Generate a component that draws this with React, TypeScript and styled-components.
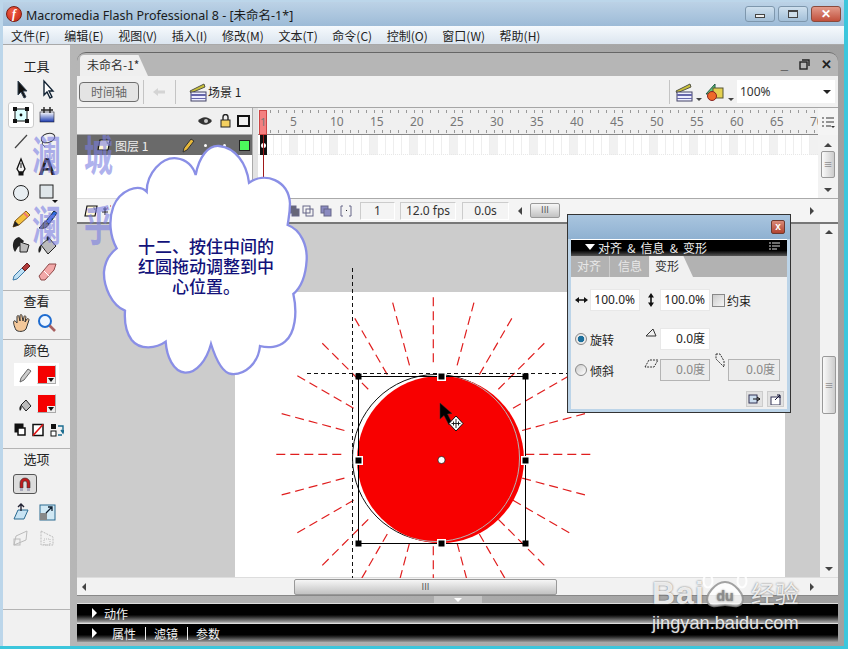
import React from "react";
import styled, { createGlobalStyle } from "styled-components";

const cjk = `"Noto Sans CJK SC", "Noto Sans", sans-serif`;
const latin = `"Noto Sans", "Noto Sans CJK SC", sans-serif`;

const GlobalStyle = createGlobalStyle`
  html, body {
    margin: 0;
    padding: 0;
    overflow: hidden;
    background: #fff;
  }
  * { box-sizing: border-box; }
`;

const Win = styled.div`
  position: relative;
  width: 848px;
  height: 649px;
  overflow: hidden;
  display: flex;
  flex-direction: column;
  padding: 2px 4px 0 3px;
  background: linear-gradient(90deg, #bcd6ea 0, #bcd6ea calc(100% - 4px), #3cc6dc calc(100% - 4px));
  border-bottom: 3px solid #3cc6dc;
  font-family: ${cjk};
  color: #222;
`;

const TitleBar = styled.div`
  height: 24px;
  flex: none;
  display: flex;
  align-items: center;
  padding-left: 3px;
  background: linear-gradient(#bcd2e6, #9dbbd7);
`;

const AppLogo = styled.span`
  width: 16px;
  height: 16px;
  border-radius: 50%;
  background: radial-gradient(circle at 40% 35%, #f2624a, #c2210f);
  border: 1px solid #7c1d10;
  color: #fff;
  font: italic bold 12px/14px "Liberation Serif", serif;
  text-align: center;
  margin-right: 4px;
`;

const TitleText = styled.span`
  font-family: ${latin};
  font-size: 12.5px;
  flex: 1;
  color: #1a1a1a;
`;

const WinButton = styled.span<{ $close?: boolean }>`
  width: 30px;
  height: 16px;
  margin-right: 3px;
  border: 1px solid ${(p) => (p.$close ? "#8a4a3c" : "#7e97ad")};
  border-radius: 3px;
  display: flex;
  align-items: center;
  justify-content: center;
  background: ${(p) =>
    p.$close ? "linear-gradient(#e29a8a, #c2503c)" : "linear-gradient(#cfe0ee, #a3bfd8)"};
  color: #fff;
  font: bold 12px/14px "Liberation Sans", sans-serif;
`;

const MinGlyph = styled.i`
  width: 10px;
  height: 4px;
  margin-top: 4px;
  border: 1px solid #444;
  background: #eee;
`;

const MaxGlyph = styled.i`
  width: 10px;
  height: 8px;
  border: 1px solid #444;
  border-top-width: 2px;
  background: #cfdeea;
`;

const MenuBar = styled.div`
  height: 19px;
  flex: none;
  display: flex;
  align-items: center;
  gap: 14.6px;
  padding-left: 8px;
  background: linear-gradient(#f6fafd, #dbe5ef);
  border-bottom: 1px solid #a9a9a9;
  font-size: 12px;
  color: #222;
`;

const Body = styled.div`
  flex: 1;
  min-height: 0;
  display: flex;
  background: linear-gradient(90deg, #b8b8b8, #a0a0a0);
`;

const Toolbox = styled.div`
  width: 67px;
  flex: none;
  position: relative;
  padding-top: 5px;
  background: #f1f1f1;
  display: flex;
  flex-direction: column;
`;

const Grip = styled.div`
  height: 5px;
  flex: none;
  margin: 0 8px;
  background-image: radial-gradient(#888 0.6px, transparent 0.7px);
  background-size: 2px 2px;
`;

const BoxTitle = styled.div<{ $h?: number }>`
  height: ${(p) => p.$h ?? 19}px;
  flex: none;
  text-align: center;
  font-size: 13px;
  line-height: ${(p) => p.$h ?? 19}px;
  color: #222;
`;

const ToolGrid = styled.div<{ $mt?: number }>`
  display: grid;
  flex: none;
  grid-template-columns: 26px 26px;
  grid-auto-rows: 26px;
  padding-left: 5px;
  margin-top: ${(p) => p.$mt ?? 0}px;
`;

const ToolCell = styled.div<{ $on?: boolean }>`
  display: flex;
  align-items: center;
  justify-content: center;
  border-radius: 3px;
  background: ${(p) => (p.$on ? "#fff" : "transparent")};
  border: 1px solid ${(p) => (p.$on ? "#ccc" : "transparent")};
  font: bold 24px/24px "Liberation Sans", sans-serif;
  color: #222;
`;

const Section = styled.div<{ $h: number }>`
  height: ${(p) => p.$h}px;
  flex: none;
  border-top: 1px solid #b4b4b4;
  display: flex;
  flex-direction: column;
`;

const SectionFirst = styled.div`
  height: 214px;
  flex: none;
`;

const ColorRow = styled.div<{ $on?: boolean }>`
  height: 23px;
  flex: none;
  margin: ${(p) => (p.$on ? 4 : 0)}px 11px 6px;
  display: flex;
  align-items: center;
  justify-content: center;
  gap: 5px;
  background: ${(p) => (p.$on ? "#fff" : "transparent")};
`;

const Swatch = styled.span`
  position: relative;
  width: 19px;
  height: 19px;
  flex: none;
  background: #f50000;
  border: 1px solid #aaa;
  border-left-color: #eee;
  border-top-color: #eee;
  &::before {
    content: "";
    position: absolute;
    right: 0;
    bottom: 0;
    width: 8px;
    height: 6px;
    background: #eee;
  }
  &::after {
    content: "";
    position: absolute;
    right: 1px;
    bottom: 1px;
    width: 0;
    height: 0;
    border-top: 4px solid #111;
    border-left: 3px solid transparent;
    border-right: 3px solid transparent;
  }
`;

const SwapRow = styled.div`
  height: 18px;
  flex: none;
  display: flex;
  align-items: center;
  gap: 6px;
  padding-left: 11px;
`;

const MagnetButton = styled.div`
  width: 24px;
  height: 20px;
  flex: none;
  margin: 6px 0 0 10px;
  border: 1px solid #555;
  border-radius: 3px;
  background: #ddd;
  display: flex;
  align-items: center;
  justify-content: center;
`;

const Main = styled.div`
  flex: 1;
  min-width: 0;
  margin-left: 7px;
  margin-right: 6px;
  padding: 7px 0 3px;
  display: flex;
  flex-direction: column;
`;

const TabStrip = styled.div`
  height: 24px;
  flex: none;
  border-top: 1px solid #666;
  border-radius: 9px 9px 0 0;
  background: #b6b6b6;
  display: flex;
  align-items: flex-end;
  padding-left: 3px;
`;

const DocTab = styled.div`
  width: 68px;
  height: 21px;
  background: #efefef;
  clip-path: polygon(0 0, 86% 0, 100% 100%, 0 100%);
  border-radius: 4px 0 0 0;
  font-size: 12px;
  line-height: 20px;
  padding-left: 7px;
  color: #333;
`;

const DocButtons = styled.div`
  margin-left: auto;
  height: 100%;
  display: flex;
  align-items: center;
  gap: 11px;
  padding-right: 6px;
  font: bold 13px/13px "Liberation Sans", sans-serif;
  color: #222;
`;

const EditBar = styled.div`
  height: 32px;
  flex: none;
  display: flex;
  align-items: center;
  background: #f1f1f1;
  border-bottom: 1px solid #a6a6a6;
  padding-left: 2px;
`;

const TimelineToggle = styled.div`
  width: 60px;
  height: 20px;
  border: 1px solid #6e6e6e;
  border-radius: 4px;
  background: #e4e4e4;
  text-align: center;
  font-size: 12px;
  line-height: 18px;
  color: #666;
`;

const BarSep = styled.span<{ $ml?: number }>`
  width: 1px;
  height: 24px;
  background: #c4c4c4;
  margin-left: ${(p) => (p.$ml === undefined ? "auto" : `${p.$ml}px`)};
`;

const BarGap = styled.span<{ $w: number }>`
  width: ${(p) => p.$w}px;
  flex: none;
`;

const SceneLabel = styled.span`
  font-size: 12px;
  margin-left: -2px;
  white-space: nowrap;
  color: #222;
`;

const MiniCaret = styled.i`
  align-self: flex-end;
  margin-bottom: 6px;
  border-top: 3px solid #444;
  border-left: 3px solid transparent;
  border-right: 3px solid transparent;
`;

const ZoomCombo = styled.div`
  width: 98px;
  height: 23px;
  margin: 0 3px 0 3px;
  padding: 0 4px 0 3px;
  background: #fff;
  font-family: ${latin};
  font-size: 12px;
  display: flex;
  align-items: center;
  justify-content: space-between;
  color: #333;
  &::after {
    content: "";
    border-top: 4px solid #222;
    border-left: 4px solid transparent;
    border-right: 4px solid transparent;
  }
`;

const Timeline = styled.div`
  height: 116px;
  flex: none;
  display: grid;
  grid-template-columns: 175px 6px 560px 20px;
  grid-template-rows: 27px 63px 24px;
  background: #f4f4f4;
  border-bottom: 2px solid #777;
  position: relative;
`;

const LayerHead = styled.div`
  display: flex;
  align-items: center;
  padding-left: 5px;
  gap: 6px;
  background: #f0f0f0;
  border-bottom: 1px solid #aaa;
`;

const LayerGrip = styled.span`
  width: 4px;
  height: 15px;
  margin-right: auto;
  background-image: radial-gradient(#888 0.6px, transparent 0.7px);
  background-size: 2px 2px;
`;

const OutlineBox = styled.span`
  width: 13px;
  height: 12px;
  margin: 0 2px 0 0;
  border: 2px solid #111;
`;

const Divider = styled.div`
  background: #e2e2e2;
  border-left: 1px solid #aaa;
  grid-row: 1 / 4;
  grid-column: 2;
`;

const Ruler = styled.div`
  display: flex;
  padding-left: 32px;
  overflow: hidden;
  border-bottom: 1px solid #888;
  background-color: #f0f0f0;
  background-image:
    repeating-linear-gradient(90deg, #999 0 1px, transparent 1px 8px),
    repeating-linear-gradient(90deg, #999 0 1px, transparent 1px 8px);
  background-size: 100% 3px, 100% 3px;
  background-position: 4px 2px, 4px 22px;
  background-repeat: no-repeat;
`;

const RulerNum = styled.span`
  width: 40px;
  flex: none;
  font-family: ${latin};
  font-size: 12px;
  line-height: 27px;
  color: #777;
`;

const RulerMenu = styled.div`
  display: flex;
  align-items: center;
  justify-content: center;
`;

const LayerPane = styled.div`
  background: #fff;
`;

const LayerRow = styled.div`
  height: 20px;
  display: flex;
  align-items: center;
  padding-left: 20px;
  background: #6a6a6a;
  color: #eee;
  font-size: 12px;
`;

const LayerName = styled.span`
  margin-left: 4px;
  width: 66px;
`;

const Dot = styled.i<{ $ml: number }>`
  width: 3px;
  height: 3px;
  border-radius: 50%;
  background: #fff;
  margin-left: ${(p) => p.$ml}px;
`;

const LayerColor = styled.i`
  width: 11px;
  height: 11px;
  margin-left: 13px;
  background: #4cf95c;
  border: 1px solid #222;
`;

const FramePane = styled.div`
  background: #fff;
  position: relative;
`;

const FrameRow = styled.div`
  height: 20px;
  background-color: #fff;
  background-image:
    repeating-linear-gradient(90deg, transparent 0 32px, #f1f1f1 32px 40px),
    repeating-linear-gradient(90deg, transparent 0 7px, #eee 7px 8px);
  border-bottom: 1px dotted #e8e8e8;
`;

const KeyFrame = styled.div`
  position: absolute;
  left: 2px;
  top: 0;
  width: 7px;
  height: 20px;
  background: #111;
  display: flex;
  align-items: center;
  justify-content: center;
  &::after {
    content: "";
    width: 5px;
    height: 5px;
    border-radius: 50%;
    background: #fff;
  }
`;

const PlayLine = styled.div`
  position: absolute;
  left: 5px;
  top: 0;
  bottom: 0;
  width: 1px;
  background: #a01818;
`;

const PlayHead = styled.div`
  position: absolute;
  left: 182px;
  top: 2px;
  width: 8px;
  height: 25px;
  background: #f48080;
  border: 1px solid #c44;
  font-family: ${latin};
  font-size: 11px;
  line-height: 22px;
  text-align: center;
  color: #777;
`;

const VBar = styled.div<{ $w?: number }>`
  width: ${(p) => p.$w ?? 20}px;
  flex: none;
  background: #f2f2f2;
  display: flex;
  flex-direction: column;
  align-items: center;
  font-size: 0;
`;

const Arrow = styled.i<{ $dir: "up" | "down" | "left" | "right"; $mt?: number; $mb?: number; $ml?: number }>`
  width: 0;
  height: 0;
  flex: none;
  border: 4px solid transparent;
  margin: ${(p) => p.$mt ?? 0}px 0 ${(p) => p.$mb ?? 0}px ${(p) => p.$ml ?? 0}px;
  ${(p) =>
    p.$dir === "up"
      ? "border-bottom-color:#444;border-top-width:0;"
      : p.$dir === "down"
        ? "border-top-color:#444;border-bottom-width:0;"
        : p.$dir === "left"
          ? "border-right-color:#444;border-left-width:0;"
          : "border-left-color:#444;border-right-width:0;"}
`;

const VThumb = styled.div<{ $h: number; $mt: number }>`
  width: 14px;
  height: ${(p) => p.$h}px;
  margin: ${(p) => p.$mt}px 0 auto;
  border: 1px solid #999;
  border-radius: 2px;
  background: linear-gradient(90deg, #fafafa, #ccc);
  display: flex;
  align-items: center;
  justify-content: center;
  color: #666;
  font-size: 9px;
  line-height: 9px;
`;

const BottomLeft = styled.div`
  background: #f4f4f4;
  border-top: 1px solid #ddd;
  display: flex;
  align-items: center;
  padding-left: 7px;
  gap: 3px;
`;

const BottomRight = styled.div`
  grid-column: 3 / 5;
  background: #f4f4f4;
  border-top: 1px solid #aaa;
  display: flex;
  align-items: center;
  padding: 0 24px 0 30px;
`;

const Onion = styled.span<{ $ml: number }>`
  margin-left: ${(p) => p.$ml}px;
  display: flex;
`;

const FrameBox = styled.span<{ $w: number; $ml: number }>`
  width: ${(p) => p.$w}px;
  height: 18px;
  margin-left: ${(p) => p.$ml}px;
  border: 1px solid #ccc;
  border-right-color: #fff;
  border-bottom-color: #fff;
  font-family: ${latin};
  font-size: 12px;
  line-height: 16px;
  text-align: center;
  color: #333;
`;

const HThumb = styled.div<{ $w: number; $ml: number; $h: number }>`
  width: ${(p) => p.$w}px;
  height: ${(p) => p.$h}px;
  margin-left: ${(p) => p.$ml}px;
  margin-right: auto;
  border: 1px solid #999;
  border-radius: 2px;
  background: linear-gradient(#f6f6f6, #c2c2c2);
  color: #555;
  font-size: 9px;
  line-height: ${(p) => p.$h - 3}px;
  text-align: center;
`;

const StageRow = styled.div`
  flex: 1;
  min-height: 0;
  display: flex;
`;

const Pasteboard = styled.div`
  position: relative;
  flex: 1;
  min-width: 0;
  background: #cccccc;
  padding: 68px 35px 0 158px;
  display: flex;
`;

const Paper = styled.div`
  flex: 1;
  background: #fff;
`;

const Drawing = styled.svg`
  position: absolute;
  left: 0;
  top: 0;
  width: 743px;
  height: 354px;
`;

const VScroll = styled(VBar)`
  padding: 6px 0;
`;

const HScroll = styled.div`
  height: 19px;
  flex: none;
  display: flex;
  align-items: center;
  padding: 0 24px 0 5px;
  background: #f2f2f2;
  border-top: 1px solid #ddd;
  border-bottom: 1px solid #888;
`;

const CollapseRow = styled.div`
  height: 7px;
  flex: none;
  display: flex;
  justify-content: center;
`;

const CollapseTab = styled.div`
  width: 48px;
  height: 7px;
  background: #c4c4c4;
  display: flex;
  align-items: center;
  justify-content: center;
  &::after {
    content: "";
    border-top: 4px solid #fff;
    border-left: 4px solid transparent;
    border-right: 4px solid transparent;
  }
`;

const DockBar = styled.div<{ $pl: number }>`
  height: 19px;
  flex: none;
  margin-bottom: 1px;
  border-top: 1px solid #ddd;
  background: linear-gradient(#000 60%, #2a2a2a 72%, #9a9a9a);
  color: #f4f4f4;
  font-size: 12px;
  line-height: 17px;
  display: flex;
  align-items: center;
  padding-left: ${(p) => p.$pl}px;
`;

const DockTri = styled.i<{ $mr: number }>`
  width: 0;
  height: 0;
  margin-right: ${(p) => p.$mr}px;
  border: 5px solid transparent;
  border-left: 5px solid #fff;
  border-right-width: 0;
`;

const DockSep = styled.span`
  width: 1px;
  height: 13px;
  background: #eee;
  margin: 0 8px 0 9px;
`;

/* overlays */

const Brush = styled.div`
  position: absolute;
  left: 32px;
  top: 127px;
  display: grid;
  grid-template-columns: 52px 30px;
  grid-auto-rows: 70px;
  font-size: 34px;
  line-height: 42px;
  font-weight: 700;
  font-family: ${cjk};
  color: rgba(122, 126, 226, 0.6);
  pointer-events: none;
`;

const BrushChar = styled.span`
  display: block;
  width: 30px;
  transform: scale(0.85, 1.25);
  transform-origin: left top;
`;

const Cloud = styled.div`
  position: absolute;
  left: 75px;
  top: 140px;
  width: 240px;
  height: 240px;
`;

const CloudShape = styled.svg`
  position: absolute;
  inset: 0;
  width: 240px;
  height: 240px;
`;

const CloudText = styled.div`
  position: absolute;
  left: 61px;
  top: 96px;
  width: 140px;
  text-align: center;
  font-size: 17px;
  line-height: 20px;
  font-weight: 500;
  color: #12127a;
`;

const Panel = styled.div`
  position: absolute;
  left: 567px;
  top: 214px;
  width: 224px;
  height: 199px;
  border: 1px solid #333;
  background: #bcd4e8;
  padding: 0 3px 3px;
  display: flex;
  flex-direction: column;
`;

const PanelTitle = styled.div`
  height: 24px;
  margin: 0 -3px;
  flex: none;
  background: linear-gradient(#a9c5df, #8fb1d1);
  display: flex;
  align-items: center;
  justify-content: flex-end;
  padding-right: 5px;
`;

const PanelClose = styled.span`
  width: 14px;
  height: 14px;
  border: 1px solid #6d3a30;
  border-radius: 2px;
  background: linear-gradient(#d98a78, #b24430);
  color: #fff;
  font: bold 10px/12px "Liberation Sans", sans-serif;
  text-align: center;
`;

const PanelHead = styled.div`
  height: 17px;
  flex: none;
  border-top: 1px solid #fff;
  background: linear-gradient(#000 65%, #555);
  color: #eee;
  font-size: 12px;
  line-height: 15px;
  word-spacing: 2.5px;
  display: flex;
  align-items: center;
  padding: 0 6px 2px 14px;
`;

const HeadTri = styled.i`
  border-top: 6px solid #fff;
  border-left: 5px solid transparent;
  border-right: 5px solid transparent;
  margin-right: 3px;
`;

const HeadMenu = styled.span`
  margin-left: auto;
  display: flex;
`;

const PanelTabs = styled.div`
  height: 21px;
  flex: none;
  background: #b2b2b2;
  display: flex;
  align-items: flex-end;
  padding-left: 6px;
  font-size: 12px;
`;

const PanelTab = styled.span<{ $on?: boolean }>`
  height: 21px;
  line-height: 20px;
  padding: ${(p) => (p.$on ? "0 14px 0 6px" : "0 8px 0 0")};
  margin-right: ${(p) => (p.$on ? 0 : 8)}px;
  color: ${(p) => (p.$on ? "#333" : "#e8e8e8")};
  background: ${(p) => (p.$on ? "#f0f0f0" : "transparent")};
  clip-path: ${(p) => (p.$on ? "polygon(0 0, 78% 0, 100% 100%, 0 100%)" : "none")};
  border-right: ${(p) => (p.$on ? "none" : "1px solid #ccc")};
  &:nth-child(2) {
    border-right: none;
    padding-right: 7px;
    margin-right: 0;
  }
`;

const PanelBody = styled.div`
  flex: 1;
  background: #f0f0f0;
  padding-top: 12px;
  display: flex;
  flex-direction: column;
`;

const FieldGrid = styled.div<{ $mt?: number }>`
  display: grid;
  grid-template-columns: 19px 50px 20px 50px 18px 52px;
  grid-auto-rows: 22px;
  row-gap: 9px;
  align-items: center;
  margin-top: ${(p) => p.$mt ?? 0}px;
  font-size: 12px;
  color: #222;
`;

const NumField = styled.span<{ $off?: boolean }>`
  height: 22px;
  font-family: ${latin};
  font-size: 12px;
  line-height: 20px;
  text-align: right;
  padding-right: 4px;
  background: ${(p) => (p.$off ? "#ececec" : "#fff")};
  border: 1px solid ${(p) => (p.$off ? "#b4b4b4" : "#e8e8e8")};
  color: ${(p) => (p.$off ? "#888" : "#222")};
`;

const IconSlot = styled.span<{ $top?: boolean; $up?: number }>`
  display: flex;
  justify-content: center;
  align-self: ${(p) => (p.$top ? "start" : "center")};
  padding-left: 2px;
  margin-top: ${(p) => -(p.$up ?? 0)}px;
`;

const Constrain = styled.label`
  grid-column: 5 / 7;
  display: flex;
  align-items: center;
  gap: 2px;
  margin-left: 2px;
`;

const CheckBox = styled.i`
  width: 13px;
  height: 13px;
  border: 1px solid #888;
  background: linear-gradient(135deg, #ccc, #f6f6f6);
`;

const RadioLabel = styled.label`
  grid-column: 1 / 3;
  display: flex;
  align-items: center;
  gap: 3px;
  padding-left: 4px;
`;

const RadioDot = styled.i<{ $on?: boolean }>`
  width: 12px;
  height: 12px;
  border-radius: 50%;
  border: 1px solid #888;
  background: ${(p) =>
    p.$on ? "radial-gradient(circle, #1c6f9c 0 3px, #eaeaea 3.6px)" : "linear-gradient(135deg, #ccc, #fff)"};
`;

const PanelFoot = styled.div`
  margin-top: auto;
  padding: 0 3px 2px 0;
  display: flex;
  justify-content: flex-end;
  gap: 4px;
`;

const FootBtn = styled.span`
  width: 17px;
  height: 16px;
  display: flex;
  align-items: center;
  justify-content: center;
  background: #e2e2e2;
  border: 1px solid #ccc;
`;

const Mark = styled.div`
  position: absolute;
  left: 652px;
  top: 555px;
  width: 152px;
  color: rgba(255, 255, 255, 0.86);
  text-shadow: 0 0 2px rgba(80, 80, 80, 0.85);
  pointer-events: none;
`;

const MarkTop = styled.div`
  height: 54px;
  display: flex;
  align-items: flex-end;
`;

const MarkBai = styled.span`
  font: bold 32px/32px "Liberation Sans", sans-serif;
  width: 50px;
  letter-spacing: 1px;
`;

const MarkPaw = styled.svg`
  width: 46px;
  height: 52px;
  flex: none;
`;

const MarkJing = styled.span`
  font-size: 24px;
  line-height: 32px;
  margin-left: 3px;
  white-space: nowrap;
`;

const MarkUrl = styled.div`
  font: 18.2px/22px "Liberation Sans", sans-serif;
  margin-top: 3px;
`;

/* icons */

const S: React.FC<{ w?: number; h?: number; vb?: string; children: React.ReactNode }> = ({
  w = 22,
  h = 22,
  vb,
  children,
}) => (
  <svg width={w} height={h} viewBox={vb ?? `0 0 ${w} ${h}`} fill="none">
    {children}
  </svg>
);

const arrowPts = "8,3 8,17 11,14 14,20 16,19 13,13 17,13";

const Clapper = () => (
  <S w={24} h={24}>
    <path d="M4 11 L18 4 L19 7 L5 13 Z" fill="#c9c03a" stroke="#554" />
    <rect x="5" y="12" width="15" height="9" fill="#eef" stroke="#446" />
    <rect x="5" y="14" width="15" height="2" fill="#66a" />
    <rect x="5" y="18" width="15" height="1" fill="#66a" />
  </S>
);

const toolIcons: { key: string; on?: boolean; node: React.ReactNode }[] = [
  { key: "arrow", node: <S><polygon points={arrowPts} fill="#111" stroke="#345" /></S> },
  { key: "sub", node: <S><polygon points={arrowPts} fill="#fff" stroke="#123" strokeWidth="1.4" /></S> },
  {
    key: "free",
    on: true,
    node: (
      <S>
        <rect x="5" y="5" width="12" height="12" fill="#dff" stroke="#111" />
        <path d="M3 3h4v4H3zM15 3h4v4h-4zM3 15h4v4H3zM15 15h4v4h-4z" fill="#111" />
        <circle cx="11" cy="11" r="1.4" fill="#111" />
      </S>
    ),
  },
  {
    key: "grad",
    node: (
      <svg width="22" height="22" viewBox="0 0 22 22">
        <defs>
          <linearGradient id="gt" x1="0" y1="0" x2="0" y2="1">
            <stop offset="0" stopColor="#fff" />
            <stop offset="1" stopColor="#1a3ab0" />
          </linearGradient>
        </defs>
        <rect x="4" y="8" width="14" height="10" fill="url(#gt)" stroke="#223" strokeWidth="0.6" />
        <path d="M8 3v6M14 3v6M5 6h12" stroke="#222" strokeWidth="1.4" />
      </svg>
    ),
  },
  { key: "line", node: <S><path d="M5 18 L17 5" stroke="#444" strokeWidth="1.2" /></S> },
  {
    key: "lasso",
    node: (
      <S>
        <ellipse cx="12" cy="8" rx="7" ry="4.5" transform="rotate(-18 12 8)" stroke="#333" fill="#eef" fillOpacity="0.3" />
        <path d="M7 12 C5 15 8 15 9 17" stroke="#333" />
      </S>
    ),
  },
  {
    key: "pen",
    node: (
      <S>
        <path d="M11 3 L15 13 L13 16 H9 L7 13 Z" fill="#f4f4f4" stroke="#111" strokeWidth="1.3" />
        <path d="M11 7v5" stroke="#111" />
        <rect x="8.5" y="16" width="5" height="3.5" fill="#111" />
      </S>
    ),
  },
  { key: "text", node: <>A</> },
  {
    key: "oval",
    node: (
      <S>
        <circle cx="11" cy="11" r="7.5" fill="#e8eef2" stroke="#222" />
      </S>
    ),
  },
  {
    key: "rect",
    node: (
      <S>
        <rect x="4" y="3" width="13" height="13" fill="#dfe6ea" stroke="#222" />
        <path d="M16 18h6l-3 3z" fill="#111" />
      </S>
    ),
  },
  {
    key: "pencil",
    node: (
      <S>
        <path d="M3 19 L5 13 L16 3 L20 7 L9 17 Z" fill="#f3c13e" stroke="#86591a" />
        <path d="M3 19 L5 13 L9 17 Z" fill="#222" />
        <path d="M14 5 L18 9" stroke="#e77" strokeWidth="2" />
      </S>
    ),
  },
  {
    key: "brush",
    node: (
      <S>
        <path d="M10 13 L18 3 L21 5 L13 16 Z" fill="#2f6ce0" stroke="#123" />
        <path d="M10 13 L13 16 C11 20 7 21 3 20 C6 18 7 14 10 13 Z" fill="#666" stroke="#222" />
      </S>
    ),
  },
  {
    key: "ink",
    node: (
      <S>
        <path d="M5 18 C1 12 3 4 9 3 L14 7 L11 11 L8 13 Z" fill="#222" />
        <path d="M10 8 L19 11 L17 18 L10 18 Z" fill="#bbb" stroke="#222" />
      </S>
    ),
  },
  {
    key: "bucket",
    node: (
      <S>
        <path d="M5 11 L13 4 L20 12 L12 20 Z" fill="#bbb" stroke="#222" />
        <path d="M5 11 C2 13 2 17 3 19 C5 17 6 15 5 11" fill="#222" />
        <path d="M12 2 C10 2 10 6 12 7 L14 4 Z" fill="#222" />
      </S>
    ),
  },
  {
    key: "dropper",
    node: (
      <S>
        <path d="M3 20 L4 16 L12 8 L15 11 L7 19 Z" fill="#bfe0f4" stroke="#3d7aa8" />
        <path d="M12 8 L17 3 L20 6 L15 11 Z" fill="#b03a3a" stroke="#622" />
      </S>
    ),
  },
  {
    key: "eraser",
    node: (
      <S>
        <path d="M3 16 L13 4 H20 L18 10 L9 20 H5 Z" fill="#f2a8a8" stroke="#8e4a4a" />
        <path d="M8 11 L13 16" stroke="#fff" />
      </S>
    ),
  },
];

const LayerSheet = () => (
  <S w={14} h={14}>
    <path d="M1 12 L3 2 H13 L11 12 Z" fill="#fff8d8" stroke="#111" strokeWidth="1.2" />
    <path d="M9 2 L13 6 L10 6 Z" fill="#888" />
  </S>
);

const Pencil = ({ dim }: { dim?: boolean }) => (
  <S w={14} h={16}>
    <path d="M2 15 L3 11 L10 2 L13 4 L6 13 Z" fill={dim ? "#ccc" : "#e8b93a"} stroke={dim ? "#666" : "#333"} />
  </S>
);

const Box = ({ fill = "none" }: { fill?: string }) => (
  <S w={12} h={12}>
    <rect x="1" y="1" width="7" height="7" stroke="#668" fill={fill} />
    <rect x="4" y="4" width="7" height="7" stroke="#668" fill={fill} />
  </S>
);

const scale = ["100.0%", "100.0%"];

const rayAngles = Array.from({ length: 24 }, (_, i) => i * 15);
const ring = [
  [358, 376],
  [441, 376],
  [525, 376],
  [358, 460],
  [525, 460],
  [358, 543],
  [441, 543],
  [525, 543],
];

function StageDrawing() {
  return (
    <Drawing viewBox="77 224 743 354">
      <defs>
        <clipPath id="inRed">
          <circle cx="440.5" cy="459.5" r="83.5" />
        </clipPath>
      </defs>
      {rayAngles.map((a) => {
        const r = (a * Math.PI) / 180;
        return (
          <line
            key={a}
            x1={433.3 + Math.cos(r) * 92}
            y1={454.3 + Math.sin(r) * 92}
            x2={433.3 + Math.cos(r) * 158}
            y2={454.3 + Math.sin(r) * 158}
            stroke="#e01e1e"
            strokeWidth={1.2}
            strokeDasharray="9 5"
          />
        );
      })}
      <path d="M352.5 268V578" stroke="#111" strokeDasharray="4 3" />
      <path d="M307 373.5H567" stroke="#111" strokeDasharray="4 3" />
      <circle cx="436" cy="458" r="83.5" fill="none" stroke="#111" strokeWidth="1" />
      <circle cx="440.5" cy="459.5" r="83.5" fill="#f80000" />
      <circle cx="436" cy="458" r="83.5" fill="none" stroke="#b4b4b4" clipPath="url(#inRed)" />
      <rect x="358.5" y="376.5" width="167" height="167" fill="none" stroke="#000" strokeWidth="1" />
      {ring.map(([x, y], i) => (
        <g key={i}>
          {(x === 441 || y === 460) && <rect x={x - 4} y={y - 4} width="9" height="9" fill="#fff" />}
          <rect x={x - 2.5} y={y - 2.5} width="6" height="6" fill="#000" />
        </g>
      ))}
      <circle cx="441.5" cy="460" r="3.6" fill="#fff" stroke="#111" strokeWidth="0.7" />
      <path d="M440 403 V419 L444 415.5 L449 425 L452 423 L447.5 414 L452 413.5 Z" fill="#000" stroke="#333" strokeWidth="0.5" />
      <path d="M456 416 L463 423.5 L456 431 L449 423.5 Z" fill="#fff" stroke="#111" />
      <path d="M456 419V428M451.5 423.5H460.5M453.5 421.5v4M458.5 421.5v4" stroke="#111" strokeWidth="0.9" />
    </Drawing>
  );
}

function Toolbar() {
  return (
    <Toolbox>
      <Grip />
      <BoxTitle $h={21}>工具</BoxTitle>
      <SectionFirst>
        <ToolGrid>
          {toolIcons.map((t) => (
            <ToolCell key={t.key} $on={t.on}>
              {t.node}
            </ToolCell>
          ))}
        </ToolGrid>
      </SectionFirst>
      <Section $h={49}>
        <BoxTitle>查看</BoxTitle>
        <ToolGrid>
          <ToolCell>
            <S>
              <path
                d="M6 18 C4 14 3 10 4 9 C5 8 6 10 7 11 L7 5 C7 3 9 3 9 5 L10 9 L10 4 C10 2 12 2 12 4 L13 9 L14 5 C14 3 16 4 16 5 L15 10 L17 7 C18 6 19 7 19 8 L16 17 C14 20 8 20 6 18 Z"
                fill="#f4c89a"
                stroke="#333"
              />
            </S>
          </ToolCell>
          <ToolCell>
            <S>
              <circle cx="9" cy="9" r="6" fill="#eef6ff" stroke="#1e6cd0" strokeWidth="2" />
              <path d="M13.5 13.5 L19 19" stroke="#a86060" strokeWidth="2.6" />
            </S>
          </ToolCell>
        </ToolGrid>
      </Section>
      <Section $h={109}>
        <BoxTitle>颜色</BoxTitle>
        <ColorRow $on>
          <Pencil dim />
          <Swatch />
        </ColorRow>
        <ColorRow>
          <S w={14} h={16}>
            <path d="M3 9 L8 4 L13 10 L8 15 Z" fill="#bbb" stroke="#222" />
            <path d="M3 9 C1 11 1 13 2 15 C4 13 4 11 3 9" fill="#222" />
          </S>
          <Swatch />
        </ColorRow>
        <SwapRow>
          <S w={12} h={14}>
            <rect x="1" y="1" width="8" height="8" fill="#111" stroke="#111" />
            <rect x="4" y="5" width="7" height="7" fill="#fff" stroke="#111" strokeWidth="1.5" />
          </S>
          <S w={12} h={14}>
            <rect x="1" y="1.5" width="10" height="11" fill="#fff" stroke="#111" strokeWidth="1.5" />
            <path d="M1 12.5 L11 1.5" stroke="#e01010" strokeWidth="1.6" />
          </S>
          <S w={14} h={14}>
            <rect x="1" y="1" width="5" height="5" fill="#111" />
            <rect x="1" y="8" width="5" height="5" fill="#fff" stroke="#111" />
            <path d="M8 3 H13 V9 M11 7 L13 10 L14 7 M12 12 H8" stroke="#1a6c90" strokeWidth="1.4" />
          </S>
        </SwapRow>
      </Section>
      <Section $h={161}>
        <BoxTitle>选项</BoxTitle>
        <MagnetButton>
          <S w={14} h={16}>
            <path d="M2 12 V7 A5 5 0 0 1 12 7 V12 H9 V7 A2 2 0 0 0 5 7 V12 Z" fill="#c01c1c" stroke="#333" strokeWidth="0.6" />
            <rect x="2" y="12" width="3" height="3" fill="#aab" />
            <rect x="9" y="12" width="3" height="3" fill="#aab" />
          </S>
        </MagnetButton>
        <ToolGrid $mt={5}>
          <ToolCell>
            <S>
              <path d="M4 18 L8 9 H18 L14 18 Z" fill="#c8e4f4" stroke="#2a6a90" />
              <path d="M11 3 V10 M8 6 L11 3 L14 6" stroke="#223" strokeWidth="1.4" />
            </S>
          </ToolCell>
          <ToolCell>
            <S>
              <rect x="4" y="4" width="15" height="15" fill="#d0e8f4" stroke="#2a6a90" />
              <rect x="4" y="12" width="7" height="7" fill="#888" />
              <path d="M10 12 L16 6 M12 6h4v4" stroke="#123" strokeWidth="1.3" />
            </S>
          </ToolCell>
          <ToolCell>
            <S>
              <path d="M4 18 L6 9 L17 4 L16 13 Z" stroke="#bbb" />
              <rect x="4" y="12" width="6" height="6" stroke="#bbb" />
            </S>
          </ToolCell>
          <ToolCell>
            <S>
              <path d="M5 4 L17 10 V18 H5 Z" stroke="#bbb" strokeDasharray="2 1" />
              <rect x="8" y="12" width="6" height="6" stroke="#bbb" strokeDasharray="1 1" />
            </S>
          </ToolCell>
        </ToolGrid>
      </Section>
      <Section $h={36} />
    </Toolbox>
  );
}

function TimelinePanel() {
  return (
    <Timeline>
      <LayerHead>
        <LayerGrip />
        <S w={16} h={12}>
          <path d="M1 6 C5 1 11 1 15 6 C11 11 5 11 1 6 Z" fill="#333" />
          <circle cx="9" cy="6" r="2" fill="#ccc" />
        </S>
        <S w={12} h={14}>
          <rect x="2" y="6" width="9" height="7" fill="#f4d060" stroke="#222" />
          <path d="M4 6 V3 A2.5 2.5 0 0 1 9 3 V6" stroke="#222" strokeWidth="1.4" />
        </S>
        <OutlineBox />
      </LayerHead>
      <Divider />
      <Ruler>
        {[5, 10, 15, 20, 25, 30, 35, 40, 45, 50, 55, 60, 65, 70].map((n) => (
          <RulerNum key={n}>{n}</RulerNum>
        ))}
      </Ruler>
      <RulerMenu>
        <S w={14} h={12}>
          <path d="M1 2h2M1 6h2M1 10h2M5 2h8M5 6h8M5 10h5" stroke="#333" />
          <path d="M10 10h4l-2 2z" fill="#333" />
        </S>
      </RulerMenu>
      <LayerPane>
        <LayerRow>
          <LayerSheet />
          <LayerName>图层 1</LayerName>
          <Pencil />
          <Dot $ml={9} />
          <Dot $ml={16} />
          <LayerColor />
        </LayerRow>
      </LayerPane>
      <FramePane>
        <FrameRow />
        <KeyFrame />
        <PlayLine />
      </FramePane>
      <VBar>
        <Arrow $dir="up" $mt={8} />
        <VThumb $h={27} $mt={4}>≡</VThumb>
        <Arrow $dir="down" $mb={6} />
      </VBar>
      <BottomLeft>
        <LayerSheet />
        <S w={14} h={12}>
          <path d="M3 3h2v2H3zM1 7h6M4 4v6" stroke="#223" />
          <path d="M6 3h2M9 1h2" stroke="#c22" strokeDasharray="1 1" />
        </S>
      </BottomLeft>
      <BottomRight>
        <Onion $ml={0}><Box fill="#667" /></Onion>
        <Onion $ml={2}><Box /></Onion>
        <Onion $ml={6}><Box fill="#8a8ac0" /></Onion>
        <Onion $ml={8}>
          <S w={12} h={12}>
            <path d="M3 1H1v10h2M9 1h2v10H9" stroke="#668" />
            <path d="M6 5.5h1" stroke="#222" />
          </S>
        </Onion>
        <FrameBox $w={35} $ml={8}>1</FrameBox>
        <FrameBox $w={56} $ml={5}>12.0 fps</FrameBox>
        <FrameBox $w={47} $ml={6}>0.0s</FrameBox>
        <Arrow $dir="left" $ml={9} />
        <HThumb $w={30} $ml={8} $h={15}>III</HThumb>
        <Arrow $dir="right" />
      </BottomRight>
      <PlayHead>1</PlayHead>
    </Timeline>
  );
}

function TransformPanel() {
  return (
    <Panel>
      <PanelTitle>
        <PanelClose>x</PanelClose>
      </PanelTitle>
      <PanelHead>
        <HeadTri />
        对齐 &amp; 信息 &amp; 变形
        <HeadMenu>
          <S w={12} h={10}>
            <path d="M0 1h2M0 4h2M0 7h2M3 1h8M3 4h8M3 7h5" stroke="#ddd" />
          </S>
        </HeadMenu>
      </PanelHead>
      <PanelTabs>
        <PanelTab>对齐</PanelTab>
        <PanelTab>信息</PanelTab>
        <PanelTab $on>变形</PanelTab>
      </PanelTabs>
      <PanelBody>
        <FieldGrid>
          <IconSlot>
            <S w={13} h={8}>
              <path d="M0 4 L4 1 V7 Z M13 4 L9 1 V7 Z M4 3.2h5v1.6H4z" fill="#111" />
            </S>
          </IconSlot>
          <NumField>{scale[0]}</NumField>
          <IconSlot>
            <S w={6} h={14}>
              <path d="M3 0 L6 4.5 H0 Z M3 14 L0 9.5 H6 Z M2.2 4h1.6v6H2.2z" fill="#111" />
            </S>
          </IconSlot>
          <NumField>{scale[1]}</NumField>
          <Constrain>
            <CheckBox />
            约束
          </Constrain>
        </FieldGrid>
        <FieldGrid $mt={17}>
          <RadioLabel>
            <RadioDot $on />
            旋转
          </RadioLabel>
          <IconSlot $top>
            <S w={12} h={9}>
              <path d="M1 8 H11 L8 1 Z" stroke="#333" />
            </S>
          </IconSlot>
          <NumField>0.0度</NumField>
          <span />
          <span />
          <RadioLabel>
            <RadioDot />
            倾斜
          </RadioLabel>
          <IconSlot $top>
            <S w={15} h={9}>
              <path d="M1 8 L5 1 H14 L10 8 Z" stroke="#333" strokeDasharray="2 1" />
            </S>
          </IconSlot>
          <NumField $off>0.0度</NumField>
          <IconSlot $top $up={6}>
            <S w={10} h={15}>
              <path d="M1 1 H5 L9 8 V14 L1 6 Z" stroke="#333" strokeDasharray="2 1" />
            </S>
          </IconSlot>
          <NumField $off>0.0度</NumField>
        </FieldGrid>
        <PanelFoot>
          <FootBtn>
            <S w={13} h={11}>
              <rect x="1" y="1" width="8" height="8" stroke="#335" fill="#cde" />
              <path d="M5 5h7M9 3l3 2-3 2" stroke="#111" />
            </S>
          </FootBtn>
          <FootBtn>
            <S w={13} h={11}>
              <rect x="2" y="3" width="9" height="8" stroke="#335" fill="#fff" />
              <path d="M6 6 L11 1 M8 1h3v3" stroke="#113" />
            </S>
          </FootBtn>
        </PanelFoot>
      </PanelBody>
    </Panel>
  );
}

export default function App() {
  return (
    <Win>
      <GlobalStyle />
      <TitleBar>
        <AppLogo>f</AppLogo>
        <TitleText>Macromedia Flash Professional 8 - [未命名-1*]</TitleText>
        <WinButton><MinGlyph /></WinButton>
        <WinButton><MaxGlyph /></WinButton>
        <WinButton $close>✕</WinButton>
      </TitleBar>
      <MenuBar>
        {["文件(F)", "编辑(E)", "视图(V)", "插入(I)", "修改(M)", "文本(T)", "命令(C)", "控制(O)", "窗口(W)", "帮助(H)"].map(
          (m) => (
            <span key={m}>{m}</span>
          ),
        )}
      </MenuBar>
      <Body>
        <Toolbar />
        <Main>
          <TabStrip>
            <DocTab>未命名-1*</DocTab>
            <DocButtons>
              <span>_</span>
              <S w={11} h={11}>
                <rect x="1" y="3" width="7" height="7" stroke="#222" strokeWidth="1.4" />
                <path d="M3 1h7v6" stroke="#222" strokeWidth="1.4" />
              </S>
              <span>✕</span>
            </DocButtons>
          </TabStrip>
          <EditBar>
            <TimelineToggle>时间轴</TimelineToggle>
            <BarSep $ml={4} />
            <S w={30} h={16}>
              <path d="M9 8 L14 4 V6.5 H21 V9.5 H14 V12 Z" fill="#d4d4d4" />
            </S>
            <BarSep $ml={1} />
            <BarGap $w={10} />
            <Clapper />
            <SceneLabel>场景 1</SceneLabel>
            <BarSep />
            <BarGap $w={2} />
            <Clapper />
            <MiniCaret />
            <BarGap $w={2} />
            <S w={24} h={24}>
              <path d="M2 14 L11 4 V14 Z" fill="#5cc878" stroke="#254" />
              <rect x="9" y="8" width="10" height="10" fill="#e4d050" stroke="#553" />
              <circle cx="8" cy="16" r="4.5" fill="#ee6a2a" stroke="#822" />
            </S>
            <MiniCaret />
            <ZoomCombo>100%</ZoomCombo>
          </EditBar>
          <TimelinePanel />
          <StageRow>
            <Pasteboard>
              <Paper />
              <StageDrawing />
            </Pasteboard>
            <VScroll $w={18}>
              <Arrow $dir="up" />
              <VThumb $h={58} $mt={122}>≡</VThumb>
              <Arrow $dir="down" />
            </VScroll>
          </StageRow>
          <HScroll>
            <Arrow $dir="left" />
            <HThumb $w={263} $ml={208} $h={16}>III</HThumb>
            <Arrow $dir="right" />
          </HScroll>
          <CollapseRow>
            <CollapseTab />
          </CollapseRow>
          <DockBar $pl={15}>
            <DockTri $mr={7} />
            动作
          </DockBar>
          <DockBar $pl={15}>
            <DockTri $mr={15} />
            属性<DockSep />滤镜<DockSep />参数
          </DockBar>
        </Main>
      </Body>
      <Brush>
        <BrushChar>澜</BrushChar>
        <BrushChar>城</BrushChar>
        <BrushChar>澜</BrushChar>
        <BrushChar>乎</BrushChar>
      </Brush>
      <Cloud>
        <CloudShape viewBox="0 0 720 720">
          <path
            d="M362 105 C372 50 400 15 432 18 C480 22 515 70 522 128 C570 95 640 120 645 190 C645 220 640 240 638 255 C680 270 697 320 695 360 C692 410 675 445 655 462 C668 520 660 580 630 605 C610 622 580 625 555 618 C550 670 510 705 470 702 C440 700 420 650 408 612 C395 660 365 700 330 698 C295 695 275 650 272 605 C245 625 195 632 170 600 C152 575 148 540 150 512 C110 495 85 440 87 395 C90 365 105 340 125 325 C105 290 100 240 115 200 C135 150 190 130 215 155 C215 100 260 50 305 55 C335 58 355 80 362 105 Z"
            fill="#fff"
            stroke="#8a8fe6"
            strokeWidth="7"
          />
        </CloudShape>
        <CloudText>
          十二、按住中间的
          <br />
          红圆拖动调整到中
          <br />
          心位置。
        </CloudText>
      </Cloud>
      <TransformPanel />
      <Mark>
        <MarkTop>
          <MarkBai>Bai</MarkBai>
          <MarkPaw viewBox="0 0 46 52">
            <g fill="none" stroke="rgba(255,255,255,.9)" strokeWidth="2">
              <ellipse cx="6" cy="24" rx="4.5" ry="6.5" />
              <ellipse cx="17" cy="10" rx="5" ry="8" />
              <ellipse cx="30" cy="10" rx="5" ry="8" />
              <ellipse cx="40" cy="24" rx="4.5" ry="6.5" />
              <path
                d="M23 25 C32 25 44 38 40 46 C36 52 28 48 23 48 C18 48 10 52 6 46 C2 38 14 25 23 25 Z"
                fill="rgba(255,255,255,.8)"
                stroke="rgba(140,140,140,.8)"
              />
            </g>
            <text x="23" y="44" textAnchor="middle" fontFamily="Liberation Sans, sans-serif" fontSize="14" fontWeight="700" fill="#8c8c8c">
              du
            </text>
          </MarkPaw>
          <MarkJing>经验</MarkJing>
        </MarkTop>
        <MarkUrl>jingyan.baidu.com</MarkUrl>
      </Mark>
    </Win>
  );
}
